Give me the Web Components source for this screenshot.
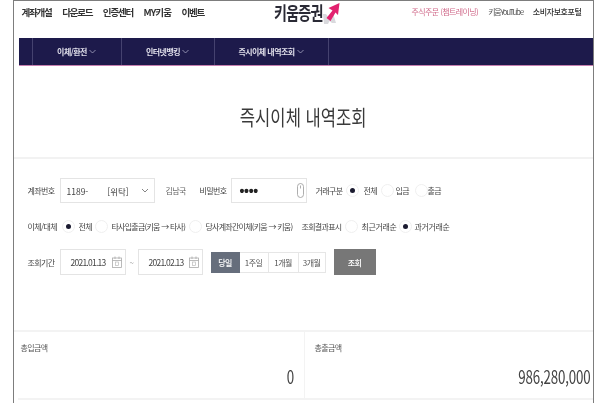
<!DOCTYPE html>
<html lang="ko"><head><meta charset="utf-8"><style>
html,body{margin:0;padding:0;background:#fff;width:600px;height:403px;overflow:hidden}
body{font-family:"Noto Sans CJK KR","Noto Sans",sans-serif;color:#333}
</style></head><body>
<kw-page>
  <kw-header></kw-header>
  <kw-nav></kw-nav>
  <kw-title>즉시이체 내역조회</kw-title>
  <kw-filter></kw-filter>
  <kw-summary></kw-summary>
</kw-page>
<script>
function def(name,css,html){
  customElements.define(name,class extends HTMLElement{
    constructor(){super();const s=this.attachShadow({mode:'open'});s.innerHTML='<style>'+css+'</style>'+html;}
  });
}
def('kw-page',`:host{display:flex;flex-direction:column;box-sizing:border-box;margin-left:13px;width:580.5px;height:403px;border:solid #7d7d7d;border-width:1px 1.5px 0 1.5px;filter:blur(.4px);overflow:hidden}`,`<slot></slot>`);

def('kw-header',`:host{display:flex;align-items:flex-start;height:37px;padding:0 0 0 7.5px;box-sizing:border-box;font-size:9.5px;font-weight:700;color:#333}
.l{display:flex;gap:10.5px;flex:0 0 252px;letter-spacing:-1.2px;margin-top:4px;line-height:14px;white-space:nowrap}
.l span:nth-child(4){letter-spacing:-.9px}
.logo{display:flex;flex:0 0 auto;margin-top:1px}
.logo span{display:block;width:49px;font-size:18.5px;font-weight:700;color:#2a2a35;letter-spacing:-1px;line-height:20px;white-space:nowrap;transform:scaleX(.76);transform-origin:0 50%}
.r{margin-left:auto;display:flex;gap:10px;font-size:8px;font-weight:400;margin-right:11px;margin-top:4px;line-height:14px;white-space:nowrap}
.p{color:#d06a8a;letter-spacing:-.6px}.g{color:#555;letter-spacing:-1.35px}.b{color:#333;font-weight:500;letter-spacing:-.4px}`,
`<div class="l"><span>계좌개설</span><span>다운로드</span><span>인증센터</span><span>MY키움</span><span>이벤트</span></div>
<div class="logo"><span>키움증권</span><svg width="17" height="23" viewBox="0 0 17 23"><path d="M0 12H3L7 17 10 11 13 21H9L6.5 19 5 22H1Z" fill="#d9d9dd"/><path d="M3.5 16 9.5 8.5 5.5 6 16.5 1 15 13 12.5 10.5 7.5 19Z" fill="#e2226f"/></svg></div>
<div class="r"><span class="p">주식주문 (챔트레이닝)</span><span class="g">키움YouTube</span><span class="b">소비자보호포털</span></div>`);

const chev=`<svg width="7" height="5" viewBox="0 0 7 5"><path d="M.5 1 3.5 4 6.5 1" fill="none" stroke="#aaa9c4" stroke-width=".8"/></svg>`;
def('kw-nav',`:host{display:flex;height:28px;box-sizing:border-box;margin-left:4.5px;background:#1d1a4b;border-bottom:1.5px solid #c77fb0;color:#e0dfea;font-size:8px;font-weight:700;letter-spacing:-.55px}
div{display:flex;align-items:center;justify-content:center;box-sizing:border-box;border-right:1px solid #45426f;white-space:nowrap}
svg{margin-left:2px}
.a{width:14px}.b{width:89px}.c{width:93px}.d{width:114px}`,
`<div class="a"></div><div class="b">이체/환전${chev}</div><div class="c">인터넷뱅킹${chev}</div><div class="d">즉시이체 내역조회${chev}</div>`);

def('kw-title',`:host{display:flex;justify-content:center;align-items:center;box-sizing:border-box;height:93px;padding-top:8px;border-bottom:2px solid #f2f2f2}
span{display:block;font-size:21px;font-weight:400;color:#3a3a3a;transform:scaleX(.79);white-space:nowrap}`,`<span><slot></slot></span>`);

def('kw-radio',`:host{display:inline-flex;align-items:center;gap:var(--g,4px);white-space:nowrap;box-sizing:border-box}
i{display:block;flex:none;width:13px;height:13px;border-radius:50%;border:1px solid #efefef;box-sizing:border-box;position:relative;background:#fff}
:host([on]) i::after{content:"";position:absolute;left:3px;top:3px;width:5px;height:5px;border-radius:50%;background:#1b1b30}`,`<i></i><slot></slot>`);

def('kw-field',`:host{display:flex;align-items:center;box-sizing:border-box;border:1px solid #e4e4e4;background:#fff;font-size:8.5px;color:#444}`,`<slot></slot>`);

const cal=`<svg width="10" height="12" viewBox="0 0 10 12" style="margin-left:auto;margin-right:3px"><rect x=".5" y="2" width="9" height="9.5" fill="none" stroke="#aaa" stroke-width=".8"/><path d="M.5 4.5H9.5M3 .5V3M7 .5V3" stroke="#aaa" stroke-width=".8"/><rect x="3.5" y="6" width="3" height="3.5" fill="none" stroke="#bbb" stroke-width=".7"/></svg>`;

def('kw-filter',`:host{display:flex;flex-direction:column;box-sizing:border-box;height:173px;padding:19px 0 0 13.5px;font-size:8px;color:#444;letter-spacing:-.6px;border-bottom:2px solid #f3f3f3}
.row{display:flex;align-items:center;white-space:nowrap;margin-bottom:11px}
.row span,.row kw-radio,.row kw-field,.row div{flex:none}
.r1{height:25px}.r2{height:24px}.r3{height:26px}
.lb{width:32px}
.sel{width:95px;height:25px;padding:0 5px 0 6px;letter-spacing:0}
.sel svg{margin-left:auto}
.name{width:34px;margin-left:11px;color:#666}
.pw{width:76px;height:25px;padding:0 2px 0 8px;margin-left:0;font:700 14px "Liberation Sans",sans-serif;letter-spacing:-.3px;color:#222}
.pw svg{margin-left:auto}
.date{width:66px;height:26px;padding-left:10px;letter-spacing:-.75px;font-size:8.5px}
.til{width:12px;padding-left:4px;box-sizing:border-box;color:#888}
.btns{display:flex;margin-left:8px;height:21px}
.btns span{display:flex;align-items:center;justify-content:center;box-sizing:border-box;border:1px solid #e6e6e6;border-left:0;color:#555}
.btns .on{background:#666e7c;color:#fff;border:0;font-weight:500}
.go{display:flex;align-items:center;justify-content:center;width:42px;height:26px;margin-left:8px;background:#777;color:#fff;font-weight:500}`,
`<div class="row r1"><span class="lb">계좌번호</span>
<kw-field class="sel"><span>1189-</span><span style="margin-left:19px">[위탁]</span><svg width="8" height="5" viewBox="0 0 8 5"><path d="M1 1 4 4 7 1" fill="none" stroke="#777" stroke-width=".9"/></svg></kw-field>
<span class="name">김남국</span><span style="width:31px">비밀번호</span>
<kw-field class="pw"><span>••••</span><svg width="7" height="15" viewBox="0 0 7 15"><rect x=".5" y=".5" width="6" height="14" rx="3" fill="none" stroke="#999" stroke-width=".8"/><path d="M3.5 2.5V5.5" stroke="#999" stroke-width=".8"/></svg></kw-field>
<span style="width:30px;margin-left:9px">거래구분</span>
<kw-radio on style="width:35px;--g:5px">전체</kw-radio><kw-radio style="width:34px;--g:2px">입금</kw-radio><kw-radio style="--g:0">출금</kw-radio></div>
<div class="row r2"><span style="width:34px">이체/대체</span>
<kw-radio on style="width:33px">전체</kw-radio>
<kw-radio style="width:94px;letter-spacing:-.75px">타사입출금(키움 → 타사)</kw-radio>
<kw-radio style="width:113px;letter-spacing:-.75px">당사계좌간이체(키움 → 키움)</kw-radio>
<span style="width:43px;letter-spacing:-.7px">조회결과표시</span>
<kw-radio style="width:54px;letter-spacing:-.35px">최근거래순</kw-radio>
<kw-radio on style="--g:3px;letter-spacing:-.35px">과거거래순</kw-radio></div>
<div class="row r3"><span class="lb">조회기간</span>
<kw-field class="date">2021.01.13${cal}</kw-field><span class="til">~</span><kw-field class="date" style="width:65px">2021.02.13${cal}</kw-field>
<div class="btns"><span class="on" style="width:29px">당일</span><span style="width:29px">1주일</span><span style="width:30px">1개월</span><span style="width:27px">3개월</span></div><div class="go">조회</div></div>`);

def('kw-summary',`:host{display:grid;grid-template-columns:286px 1fr;height:68px;box-sizing:border-box;border-bottom:2px solid #f3f3f3;margin-left:3.5px}
div{display:flex;flex-direction:column;padding:11px 10px 0 3px;box-sizing:border-box;min-width:0}
div+div{border-left:1px solid #f3f3f3;padding:11px 2.5px 0 10px}
small{font-size:8px;line-height:10px;color:#555;letter-spacing:-.6px}
b{display:block;margin-top:10px;font-weight:400;font-size:18px;text-align:right;color:#444;line-height:26px;letter-spacing:-.2px;transform:scaleX(.74);transform-origin:100% 50%;white-space:nowrap}`,
`<div><small>총입금액</small><b>0</b></div><div><small>총출금액</small><b>986,280,000</b></div>`);
</script>
</body></html>
